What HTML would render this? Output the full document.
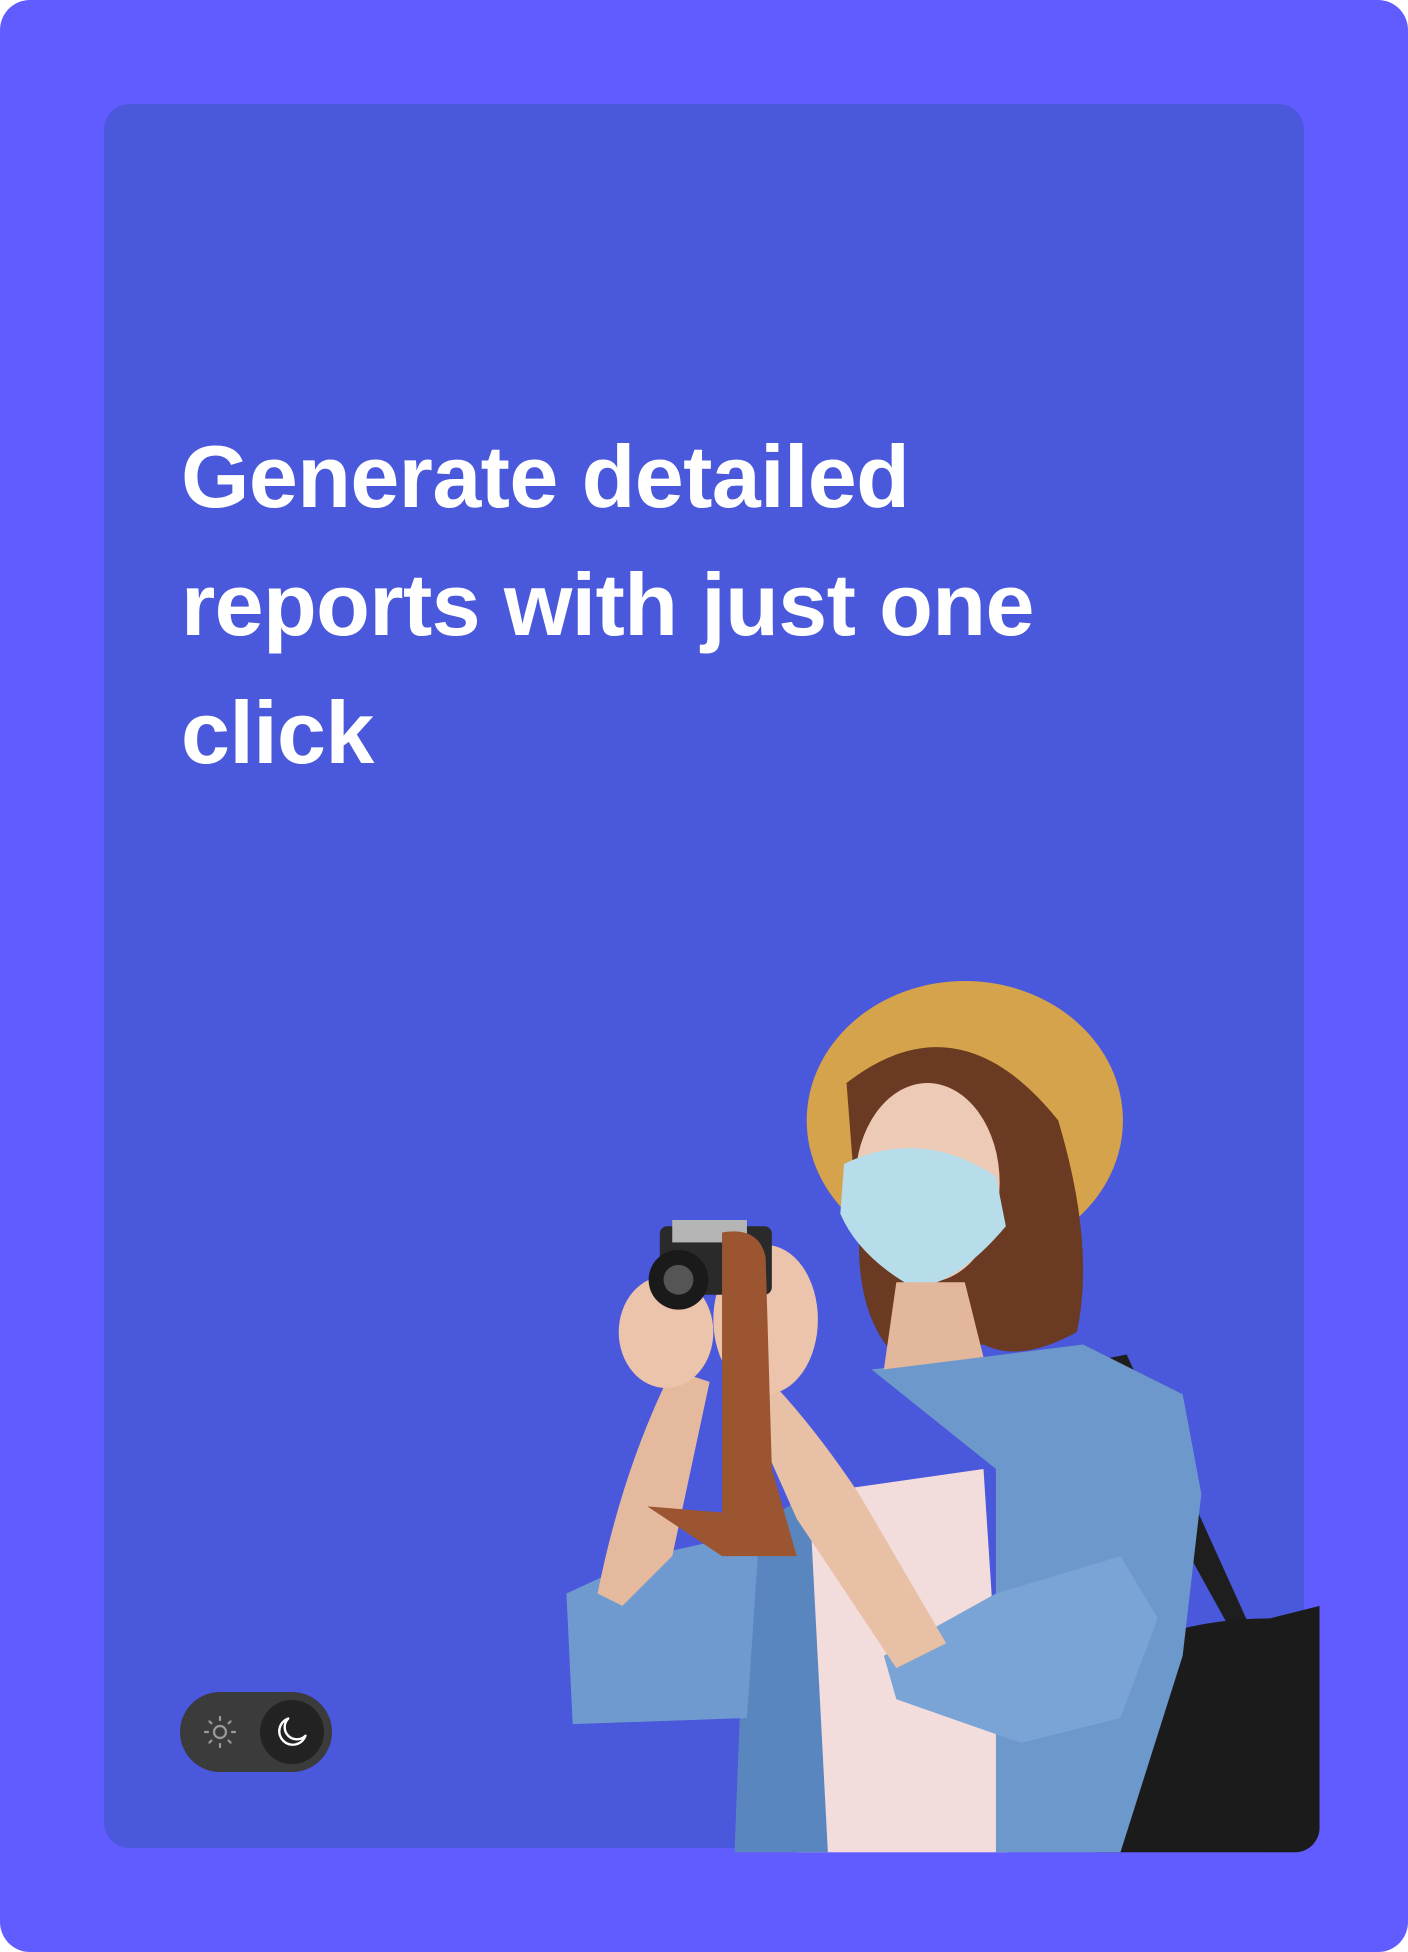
<!DOCTYPE html>
<html><head><meta charset="utf-8"><style>
html,body{margin:0;padding:0;background:#fff}
.page{position:relative;width:1408px;height:1952px;background:#605cff;border-radius:30px;overflow:hidden}
.card{position:absolute;left:104px;top:104px;width:1200px;height:1744px;background:#4a58db;border-radius:26px}
h1{position:absolute;left:181px;top:413px;margin:0;font-family:"Liberation Sans",sans-serif;font-weight:700;color:#fff;font-size:88px;line-height:128px;letter-spacing:-0.6px}
svg.ph{position:absolute;left:0;top:0}
.tog{position:absolute;left:180px;top:1692px;width:152px;height:80px;border-radius:40px;background:#3b3b3b}
.knob{position:absolute;left:80px;top:8px;width:64px;height:64px;border-radius:50%;background:#222}
</style></head><body><div class="page">
<div class="card"></div>
<h1>Generate detailed<br>reports with just one<br>click</h1>
<svg class="ph" width="1408" height="1952" viewBox="0 0 1131 1568">
<defs><clipPath id="c"><rect x="84" y="84" width="976" height="1404" rx="20"/></clipPath></defs>
<g clip-path="url(#c)">
<path d="M870 1095 L905 1088 L1010 1320 L1000 1330 Z" fill="#1e1e1e"/>
<path d="M870 1340 Q940 1300 1020 1300 L1060 1290 L1060 1488 L880 1488 Q860 1420 870 1340Z" fill="#1c1b1c"/>
<path d="M650 1200 L790 1180 L810 1488 L640 1488 Z" fill="#f3dcdc"/>
<path d="M700 1100 L790 1090 L870 1080 L950 1120 L965 1200 L950 1330 L900 1488 L800 1488 L800 1180 Z" fill="#6c98cc"/>
<path d="M600 1230 L650 1200 L665 1488 L590 1488 Z" fill="#5a86bf"/>
<path d="M455 1280 L520 1250 L610 1230 L600 1380 L460 1385 Z" fill="#6f9ad0"/>
<path d="M710 1330 L800 1280 L900 1250 L930 1300 L900 1380 L820 1400 L720 1365Z" fill="#7aa3d6"/>
<path d="M480 1280 Q500 1180 540 1100 L570 1110 L540 1250 L500 1290Z" fill="#e5b99e"/>
<path d="M610 1100 Q650 1140 690 1200 L760 1320 L720 1340 L640 1220 L600 1130Z" fill="#e8c0a5"/>
<ellipse cx="535" cy="1070" rx="38" ry="45" fill="#ecc3ab"/>
<ellipse cx="615" cy="1060" rx="42" ry="60" fill="#ecc3ab"/>
<rect x="530" y="985" width="90" height="55" rx="6" fill="#2a2a2a"/>
<rect x="540" y="980" width="60" height="18" fill="#b5b5b5"/>
<circle cx="545" cy="1028" r="24" fill="#1a1a1a"/><circle cx="545" cy="1028" r="12" fill="#555"/>
<path d="M580 990 Q610 985 615 1010 L620 1180 L640 1250 L580 1250 L520 1210 L580 1215 Z" fill="#9b5530"/>
<ellipse cx="775" cy="900" rx="127" ry="112" fill="#d5a34b"/>
<path d="M680 870 Q770 800 850 900 Q880 1000 865 1070 Q820 1095 790 1080 L720 1090 Q690 1060 690 1000 Z" fill="#6a3a22"/>
<ellipse cx="745" cy="950" rx="58" ry="80" fill="#eccab5"/>
<path d="M678 935 Q740 905 800 945 L808 985 Q770 1030 735 1035 Q690 1010 675 975 Z" fill="#b7dcea"/>
<path d="M720 1030 L775 1030 L790 1090 L710 1100 Z" fill="#e3b79c"/>
</g>
</svg>
<div class="tog">
<svg style="position:absolute;left:22px;top:22px" width="36" height="36" viewBox="0 0 36 36" stroke="#9a9a9a" stroke-width="2.2" fill="none" stroke-linecap="round">
<circle cx="18" cy="18" r="6"/>
<path d="M18 3v3M18 30v3M3 18h3M30 18h3M7.4 7.4l2 2M26.6 26.6l2 2M7.4 28.6l2-2M26.6 9.4l2-2"/>
</svg>
<div class="knob">
<svg style="position:absolute;left:14px;top:14px" width="36" height="36" viewBox="0 0 24 24" fill="none" stroke="#fff" stroke-width="1.6" stroke-linejoin="round">
<path d="M21 14.5A9 9 0 1 1 9.5 3 7.5 7.5 0 0 0 21 14.5z"/>
</svg>
</div>
</div>
</div></body></html>
